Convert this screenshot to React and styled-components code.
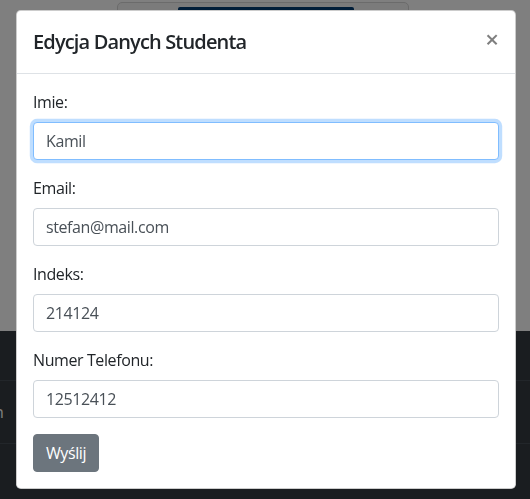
import React, { useEffect, useRef } from "react";
import styled, { createGlobalStyle, css } from "styled-components";

const GlobalStyle = createGlobalStyle`
  * { box-sizing: border-box; }
  html, body {
    margin: 0;
    padding: 0;
    background: #fff;
    overflow: hidden;
  }
  body {
    font-family: "Segoe UI", "Open Sans", "Noto Sans", "Liberation Sans", sans-serif;
    font-size: 16px;
    line-height: 1.5;
    letter-spacing: -0.4px;
    color: #212529;
  }
`;

const Page = styled.div`
  width: 530px;
  height: 499px;
  display: flex;
  flex-direction: column;
  overflow: hidden;
`;

const TopArea = styled.div`
  height: 331px;
  display: flex;
  justify-content: flex-start;
  padding-left: 117px;
  padding-top: 2px;
`;

const Card = styled.div`
  width: 292px;
  height: 60px;
  border: 1px solid #d6d6d6;
  border-radius: 5px;
  background: #f7f7f7;
  display: flex;
  justify-content: flex-start;
  padding-left: 60px;
  padding-top: 4px;
`;

const Banner = styled.div`
  width: 176px;
  height: 40px;
  background: #003a70;
  border-radius: 2px;
`;

const DarkTable = styled.div`
  flex: 1;
  background: #343a40;
  display: flex;
  flex-direction: column;
`;

const Row = styled.div`
  height: ${(p) => p.h}px;
  border-bottom: 1px solid #454d55;
  display: flex;
  align-items: center;
  color: #fff;
  font-size: 16px;
`;

const Cell = styled.span`
  margin-left: -6px;
`;

const Backdrop = styled.div`
  position: fixed;
  inset: 0;
  background: rgba(0, 0, 0, 0.5);
`;

const Dialog = styled.div`
  position: fixed;
  left: 16px;
  top: 10px;
  width: 500px;
  background: #fff;
  border: 1px solid rgba(0, 0, 0, 0.2);
  border-radius: 4.8px;
  display: flex;
  flex-direction: column;
`;

const Header = styled.div`
  display: flex;
  align-items: flex-start;
  justify-content: space-between;
  padding: 16px;
  border-bottom: 1px solid #dee2e6;
`;

const Title = styled.h5`
  margin: 0;
  font-size: 20px;
  font-weight: 600;
  line-height: 1.5;
  letter-spacing: -0.85px;
  color: #212529;
`;

const Close = styled.button`
  border: 0;
  background: transparent;
  padding: 16px;
  margin: -16px -16px -16px auto;
  font-family: inherit;
  font-size: 24px;
  font-weight: 600;
  line-height: 1;
  color: #000;
  text-shadow: 0 1px 0 #fff;
  opacity: 0.5;
  cursor: pointer;
`;

const Body = styled.form`
  padding: 16px;
  display: flex;
  flex-direction: column;
  align-items: flex-start;
`;

const Group = styled.div`
  width: 100%;
  margin-bottom: 16px;
`;

const Label = styled.label`
  display: block;
  margin-bottom: 8px;
  color: #212529;
`;

const Input = styled.input`
  display: block;
  width: 100%;
  height: 38px;
  padding: 6px 12px;
  font-family: inherit;
  font-size: 16px;
  line-height: 1.5;
  letter-spacing: inherit;
  color: #495057;
  background: #fff;
  border: 1px solid #ced4da;
  border-radius: 4px;
  outline: none;
  caret-color: #212529;
  ${(p) =>
    p.$focused &&
    css`
      border-color: #80bdff;
      box-shadow: 0 0 0 3.2px rgba(0, 123, 255, 0.25);
    `}
`;

const Submit = styled.button`
  font-family: inherit;
  font-size: 16px;
  line-height: 1.5;
  letter-spacing: inherit;
  padding: 6px 12px;
  color: #fff;
  background: #6c757d;
  border: 1px solid #6c757d;
  border-radius: 4px;
  cursor: pointer;
`;

const fields = [
  { id: "imie", label: "Imie:", value: "Kamil", focused: true },
  { id: "email", label: "Email:", value: "stefan@mail.com" },
  { id: "indeks", label: "Indeks:", value: "214124" },
  { id: "tel", label: "Numer Telefonu:", value: "12512412" },
];

export default function App() {
  const firstRef = useRef(null);

  useEffect(() => {
    const el = firstRef.current;
    if (el) {
      el.focus();
      el.setSelectionRange(el.value.length, el.value.length);
    }
  }, []);

  return (
    <>
      <GlobalStyle />
      <Page>
        <TopArea>
          <Card>
            <Banner />
          </Card>
        </TopArea>
        <DarkTable>
          <Row h={50} />
          <Row h={63}>
            <Cell>n</Cell>
          </Row>
        </DarkTable>
      </Page>

      <Backdrop />
      <Dialog>
        <Header>
          <Title>Edycja Danych Studenta</Title>
          <Close type="button" aria-label="Close">
            ×
          </Close>
        </Header>
        <Body onSubmit={(e) => e.preventDefault()}>
          {fields.map((f, i) => (
            <Group key={f.id}>
              <Label htmlFor={f.id}>{f.label}</Label>
              <Input
                id={f.id}
                ref={i === 0 ? firstRef : undefined}
                defaultValue={f.value}
                $focused={f.focused}
              />
            </Group>
          ))}
          <Submit type="submit">Wyślij</Submit>
        </Body>
      </Dialog>
    </>
  );
}
